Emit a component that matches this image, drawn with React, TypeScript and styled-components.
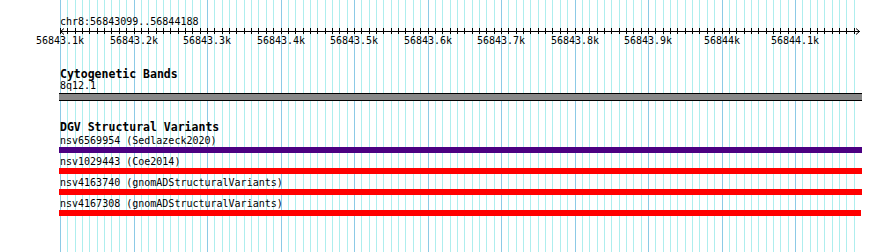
import styled, { createGlobalStyle } from "styled-components";

// ruler geometry: px per bp and x of the first major gridline
const SCALE = 0.735;
const ORIGIN = 60;
const FIRST_BP = 56843100;
const LINES = 109;

const xAt = (i: number) => Math.round(ORIGIN + i * SCALE * 10);

const GlobalStyle = createGlobalStyle`
  html, body {
    margin: 0;
    padding: 0;
    background: #ffffff;
  }
  body {
    font-family: "DejaVu Sans Mono", "Liberation Mono", monospace;
    color: #000000;
  }
`;

const Page = styled.div`
  position: relative;
  width: 890px;
  height: 252px;
  overflow: hidden;
  background: #ffffff;
`;

const GridLayer = styled.div`
  position: absolute;
  inset: 0;
  pointer-events: none;
`;

const GridLine = styled.div<{ $major?: boolean }>`
  position: absolute;
  top: 0;
  bottom: 0;
  width: 1px;
  background: ${(p) => (p.$major ? "#8ccae6" : "#aeeeee")};
`;

const Content = styled.div`
  position: relative;
  display: flex;
  flex-direction: column;
`;

const Locus = styled.div`
  padding: 15px 0 0 60px;
  font-size: 10px;
  line-height: 13px;
  white-space: nowrap;
`;

const Axis = styled.svg`
  display: block;
  font-family: "DejaVu Sans Mono", "Liberation Mono", monospace;
  font-size: 10px;
`;

const Track = styled.section<{ $gap: number }>`
  display: flex;
  flex-direction: column;
  margin-top: ${(p) => p.$gap}px;
  padding-left: 59px;
`;

const TrackLabel = styled.div<{ $lh: number }>`
  font-weight: bold;
  font-size: 11.5px;
  line-height: ${(p) => p.$lh}px;
  padding-left: 1px;
  white-space: nowrap;
`;

const FeatureList = styled.div<{ $gap: number }>`
  display: flex;
  flex-direction: column;
  margin-top: ${(p) => p.$gap}px;
`;

const Feature = styled.div`
  display: flex;
  flex-direction: column;
  margin-bottom: 3px;
`;

const FeatureLabel = styled.div`
  font-size: 10px;
  line-height: 12px;
  padding-left: 1px;
  white-space: nowrap;
`;

const Bar = styled.div<{ $color: string; $width: number }>`
  width: ${(p) => p.$width}px;
  height: 6px;
  background: ${(p) => p.$color};
`;

const BandBar = styled.div`
  width: 803px;
  height: 8px;
  margin-top: 1px;
  box-sizing: border-box;
  border-top: 1px solid #000000;
  border-bottom: 1px solid #000000;
  background: #888888;
`;

const variants = [
  { name: "nsv6569954 (Sedlazeck2020)", color: "#4b0082", width: 803 },
  { name: "nsv1029443 (Coe2014)", color: "#ff0000", width: 803 },
  { name: "nsv4163740 (gnomADStructuralVariants)", color: "#ff0000", width: 803 },
  { name: "nsv4167308 (gnomADStructuralVariants)", color: "#ff0000", width: 802 },
];

const Ruler = () => {
  const ticks = Array.from({ length: LINES }, (_, i) => i);
  return (
    <Axis width={890} height={18} viewBox="0 0 890 18">
      <line x1={60} y1={3.5} x2={860} y2={3.5} stroke="#000" strokeWidth={1} />
      <polyline points="64,0.5 60.5,3.5 64,6.5" fill="none" stroke="#000" strokeWidth={1} />
      <polyline points="856,0.5 859.5,3.5 856,6.5" fill="none" stroke="#000" strokeWidth={1} />
      {ticks.map((i) => (
        <line key={i} x1={xAt(i) + 0.5} y1={0} x2={xAt(i) + 0.5} y2={6} stroke="#000" strokeWidth={1} />
      ))}
      {ticks
        .filter((i) => i % 10 === 0)
        .map((i) => (
          <text key={i} x={xAt(i)} y={15.5} textAnchor="middle" fill="#000">
            {(FIRST_BP + i * 10) / 1000}k
          </text>
        ))}
    </Axis>
  );
};

const App = () => {
  return (
    <Page>
      <GlobalStyle />
      <GridLayer>
        {Array.from({ length: LINES }, (_, i) => (
          <GridLine key={i} $major={i % 10 === 0} style={{ left: xAt(i) }} />
        ))}
      </GridLayer>
      <Content>
        <Locus>chr8:56843099..56844188</Locus>
        <Ruler />
        <Track $gap={22}>
          <TrackLabel $lh={12}>Cytogenetic Bands</TrackLabel>
          <FeatureLabel>8q12.1</FeatureLabel>
          <BandBar />
        </Track>
        <Track $gap={20}>
          <TrackLabel $lh={13}>DGV Structural Variants</TrackLabel>
          <FeatureList $gap={1}>
            {variants.map((v) => (
              <Feature key={v.name}>
                <FeatureLabel>{v.name}</FeatureLabel>
                <Bar $color={v.color} $width={v.width} />
              </Feature>
            ))}
          </FeatureList>
        </Track>
      </Content>
    </Page>
  );
};

export default App;
